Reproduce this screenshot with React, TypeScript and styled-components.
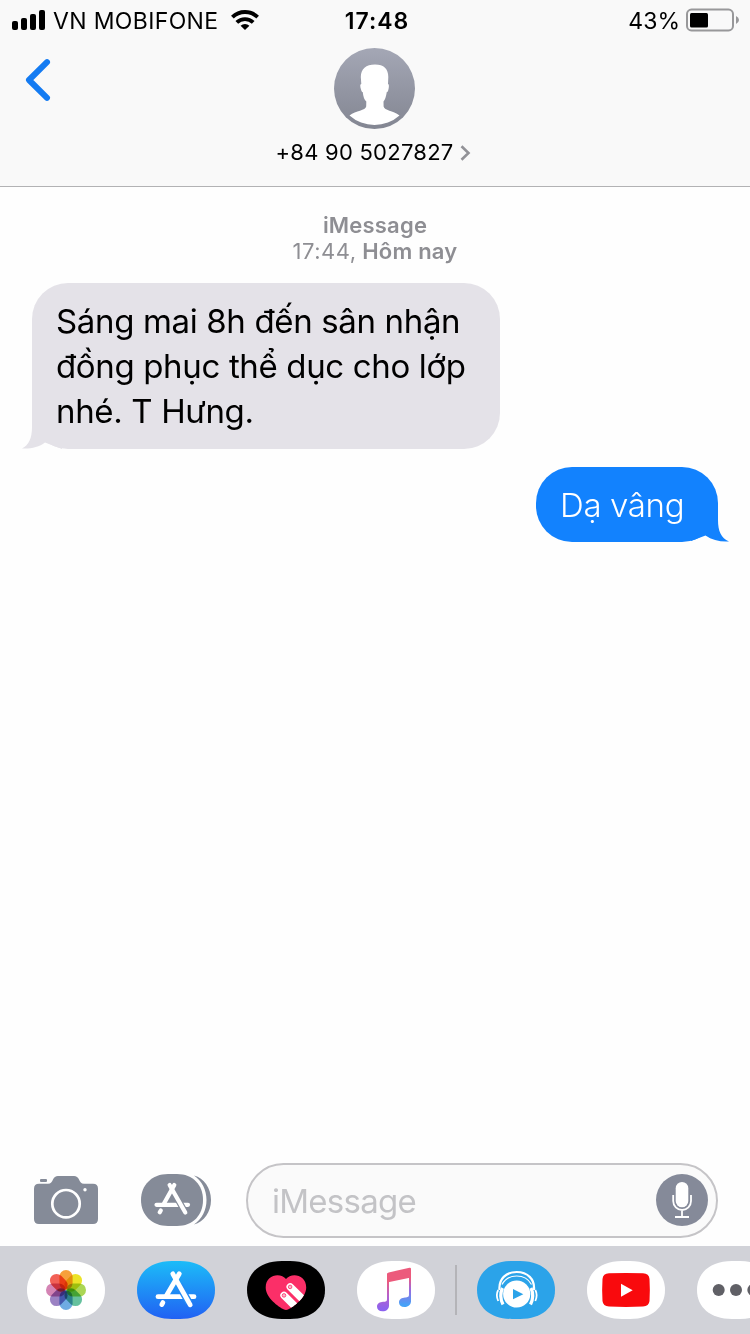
import React from "react";
import styled, { createGlobalStyle } from "styled-components";

const Global = createGlobalStyle`
  * { box-sizing: border-box; }
  body { margin: 0; background: #fff; overflow: hidden; }
`;

const Screen = styled.div`
  width: 750px;
  height: 1334px;
  display: flex;
  flex-direction: column;
  overflow: hidden;
  background: #fefefe;
  color: #000;
  font-family: Inter, "Liberation Sans", sans-serif;
  svg { display: block; flex: none; }
`;

const Header = styled.header`
  height: 187px;
  background: #f9f9f9;
  border-bottom: 1px solid #b2b2b4;
`;

const StatusBar = styled.div`
  height: 40px;
  display: grid;
  grid-template-columns: 1fr auto 1fr;
  padding: 0 11px 0 12px;
  line-height: 40px;
`;

const StatusGroup = styled.div<{ $end?: boolean }>`
  display: flex;
  align-items: center;
  justify-content: ${(p) => (p.$end ? "flex-end" : "flex-start")};
`;

const StatusText = styled.span<{ $spacing: number; $bold?: boolean }>`
  font-size: 23px;
  line-height: 42px;
  height: 40px;
  white-space: nowrap;
  font-weight: ${(p) => (p.$bold ? 600 : 400)};
  letter-spacing: ${(p) => p.$spacing}px;
`;

const Carrier = styled(StatusText)`
  width: 166px;
  margin: 0 12px 0 7px;
`;

const Clock = styled(StatusText)`
  padding-left: 3px;
`;

const Percent = styled(StatusText)`
  margin-right: 6px;
`;

const NavBar = styled.div`
  display: grid;
  grid-template-columns: 1fr auto 1fr;
  padding: 8px 26px 0 25px;
`;

const BackButton = styled.div`
  padding-top: 11px;
`;

const Contact = styled.div`
  display: flex;
  flex-direction: column;
  align-items: center;
`;

const PhoneRow = styled.div`
  display: flex;
  align-items: center;
  gap: 6px;
  margin: 8px 3px 0 0;
  font-size: 22px;
  line-height: 30px;
  letter-spacing: 0.25px;
  white-space: nowrap;
  svg { margin-top: 2px; }
`;

const Conversation = styled.main`
  flex: 1;
  display: flex;
  flex-direction: column;
  padding: 25px 32px 0;
`;

const Stamp = styled.div`
  text-align: center;
  color: #8e8e93;
  font-size: 22px;
  line-height: 26px;
  letter-spacing: 0.2px;
  font-weight: 600;
  span { font-weight: 400; letter-spacing: 0.5px; }
`;

const Bubble = styled.div<{ $mine?: boolean }>`
  position: relative;
  z-index: 0;
  align-self: ${(p) => (p.$mine ? "flex-end" : "flex-start")};
  width: ${(p) => (p.$mine ? 182 : 468)}px;
  margin-top: ${(p) => (p.$mine ? 18 : 19)}px;
  padding: ${(p) => (p.$mine ? "16px 24px 14px 24px" : "16px 24px 15px 24px")};
  border-radius: 36px;
  background: ${(p) => (p.$mine ? "#1282fe" : "#e4e2e8")};
  color: ${(p) => (p.$mine ? "#fff" : "#000")};
  font-size: 33px;
  line-height: 45px;
  letter-spacing: -0.35px;
  font-weight: ${(p) => (p.$mine ? 350 : 400)};
  white-space: nowrap;
`;

const Tail = styled.svg<{ $mine?: boolean }>`
  position: absolute;
  z-index: -1;
  bottom: 0;
  ${(p) => (p.$mine ? "right: -11px;" : "left: -10px;")}
`;

const Composer = styled.div`
  height: 83px;
  display: flex;
  align-items: center;
  padding: 0 32px 8px 34px;
`;

const CameraButton = styled.div`
  margin-top: -2px;
`;

const DrawerButton = styled.div`
  margin: -2px 35px 0 43px;
`;

const MicButton = styled.div`
  margin-top: -2px;
`;

const InputField = styled.div`
  flex: 1;
  height: 75px;
  display: flex;
  align-items: center;
  justify-content: space-between;
  padding: 0 8px 0 24px;
  border: 2px solid #c5c4c7;
  border-radius: 38px;
  background: #fafafa;
  color: #c3c3c6;
  font-size: 33px;
  letter-spacing: -0.75px;
`;

const AppStrip = styled.nav`
  height: 88px;
  display: flex;
  align-items: flex-start;
  padding: 15px 0 0 27px;
  gap: 32px;
  background: #d1d2d8;
`;

const Divider = styled.div`
  flex: none;
  width: 2px;
  height: 50px;
  margin: 4px -12px;
  background: #b4b4b8;
`;

const PILL =
  "M35 0H43C65 0 78 12 78 29S65 58 43 58H35C13 58 0 46 0 29S13 0 35 0Z";

const Pill = ({ fill, children }: { fill: string; children: React.ReactNode }) => (
  <svg width="78" height="58" viewBox="0 0 78 58">
    <path d={PILL} fill={fill} />
    {children}
  </svg>
);

const petals = [
  "#f79a2e", "#ebe21a", "#a6d44a", "#5cbd98",
  "#66a6e2", "#957abf", "#d27cb0", "#f2574c",
];

const Signal = () => (
  <svg width="34" height="20" viewBox="0 0 34 20">
    <rect x="0" y="11" width="6" height="9" rx="2" />
    <rect x="9" y="8" width="6" height="12" rx="2" />
    <rect x="18" y="4" width="6" height="16" rx="2" />
    <rect x="27" y="0" width="6" height="20" rx="2" />
  </svg>
);

const Wifi = () => (
  <svg width="28" height="20" viewBox="0 0 28 20">
    <g fill="none" stroke="#000" strokeWidth="3.9">
      <path d="M1.4 7.2A18 18 0 0 1 26.6 7.2" />
      <path d="M5.8 12.4A11.8 11.8 0 0 1 22.2 12.4" />
    </g>
    <path d="M9.6 15.8A6.3 6.3 0 0 1 18.4 15.8L14 20Z" />
  </svg>
);

const Battery = () => (
  <svg width="53" height="24" viewBox="0 0 53 24">
    <rect x="1" y="1.6" width="46" height="20.8" rx="4.5" fill="none" stroke="#98989a" strokeWidth="2" />
    <rect x="4" y="5" width="18" height="14.5" rx="1.5" />
    <path d="M50 8Q53 9.5 53 12T50 16Z" fill="#98989a" />
  </svg>
);

const Avatar = () => (
  <svg width="81" height="81" viewBox="0 0 81 81">
    <defs>
      <linearGradient id="avatar" x2="0" y2="1">
        <stop offset="0" stopColor="#a4a7b5" />
        <stop offset="1" stopColor="#838692" />
      </linearGradient>
    </defs>
    <circle cx="40.5" cy="40.5" r="40.5" fill="url(#avatar)" />
    <path
      fill="#fff"
      d="M41 16.5C50 16.5 54.3 21 54.3 29L54 36C55.3 36 55 39.5 54.3 42C53.8 44 53.2 44 52.8 44C52 49 51 51.5 49.5 53.5L49.6 58.5C50.3 62.5 59 62.5 65.5 67.5A37.5 37.5 0 0 1 15.500 67.5C22 62.5 31.5 62.5 32.2 58.5L32.3 53.5C30.3 51.5 29.3 49 28.7 44C28 44 27.6 43.5 27 41.5C26 38.5 26 36 27.3 36L26.8 29C26.8 21 32 16.5 41 16.5Z"
    />
  </svg>
);

const Camera = () => (
  <svg width="64" height="48" viewBox="0 0 64 48" fill="#858b98">
    <rect x="6" y="3" width="7" height="3" rx="1" />
    <path d="M5 7.7H14C17 7.7 17.8 6 19 3.5Q20.5 0 24 0H40Q43.5 0 45 3.5C46.2 6 47 7.7 50 7.7H59Q64 7.7 64 12.7V43Q64 48 59 48H5Q0 48 0 43V12.7Q0 7.7 5 7.7Z" />
    <circle cx="32" cy="27.7" r="13.7" fill="none" stroke="#fff" strokeWidth="2.7" />
    <circle cx="51" cy="13.7" r="1.7" fill="#fff" />
  </svg>
);

const Drawer = () => (
  <svg width="70" height="52" viewBox="0 0 70 52">
    <path d="M27 0H36C52 0 62 11 62 26S52 52 36 52H27C11 52 0 41 0 26S11 0 27 0Z" fill="#858b98" />
    <path d="M53 1.5C63 4 70 14 70 26S63 48 53 50.5C61 45 65.5 36 65.5 26S61 7 53 1.5Z" fill="#858b98" />
    <g stroke="#fff" strokeWidth="4.2" strokeLinecap="round">
      <path d="M15.5 30.8H47" />
      <path d="M33.3 11L23 29.5M19.8 36.5L18.7 38.3" />
      <path d="M28.6 11L44.3 38.5" stroke="#858b98" strokeWidth="6.5" strokeDasharray="0 12 18 20" strokeLinecap="butt" />
      <path d="M28.6 11L44.3 38.5" />
    </g>
  </svg>
);

const Mic = () => (
  <svg width="52" height="52" viewBox="0 0 52 52">
    <circle cx="26" cy="26" r="26" fill="#858a99" />
    <rect x="19.7" y="8" width="12.6" height="25.3" rx="6.3" fill="#fff" />
    <path d="M17.2 21V27A8.9 9 0 0 0 35 27V21M26 36V43M19 43H33" fill="none" stroke="#fff" strokeWidth="1.8" />
  </svg>
);

const Photos = () => (
  <Pill fill="#fff">
    {petals.map((c, i) => (
      <rect
        key={c}
        x="32.4"
        y="9"
        width="13.2"
        height="19.6"
        rx="6.6"
        fill={c}
        opacity="0.94"
        transform={`rotate(${i * 45} 39 29)`}
        style={{ mixBlendMode: "multiply" }}
      />
    ))}
  </Pill>
);

const AppStore = () => (
  <Pill fill="url(#store)">
    <defs>
      <linearGradient id="store" x2="0" y2="1">
        <stop offset="0" stopColor="#1cbcf8" />
        <stop offset="1" stopColor="#2161f3" />
      </linearGradient>
    </defs>
    <g stroke="#fff" strokeWidth="4.8" strokeLinecap="round">
      <path d="M21 35.7H57" />
      <path d="M42.3 12.8L29.5 34.5M25.9 41.6L24.8 43.6" />
      <path d="M35.8 12.8L53.2 43.8" stroke="#248af5" strokeWidth="7.5" strokeDasharray="0 13 20 30" strokeLinecap="butt" />
      <path d="M35.8 12.8L53.2 43.8" />
    </g>
  </Pill>
);

const HEART =
  "M39 18C34 11.5 18.7 13 18.7 26.5C18.7 37 32 46 36.5 48.3Q39 49.5 41.5 48.3C46 46 59.2 37 59.2 26.5C59.2 13 44 11.5 39 18Z";

const DigitalTouch = () => (
  <Pill fill="#000">
    <clipPath id="heart">
      <path d={HEART} />
    </clipPath>
    <path d={HEART} fill="#fb2f68" />
    <g clipPath="url(#heart)" stroke="#fff" strokeWidth="7.4" strokeLinecap="round">
      <path d="M43.2 25.8L60 42.6M37 34.3L54 51.3" />
    </g>
    <g fill="#fb2f68" fillOpacity="0.35" stroke="#fb2f68" strokeWidth="0.8">
      <circle cx="43.1" cy="25.9" r="1.8" />
      <circle cx="37" cy="34.4" r="1.8" />
    </g>
  </Pill>
);

const Music = () => (
  <Pill fill="#fff">
    <defs>
      <linearGradient id="noteL" gradientUnits="userSpaceOnUse" x1="0" y1="10" x2="0" y2="48">
        <stop offset="0.25" stopColor="#ee5b7e" />
        <stop offset="0.65" stopColor="#b560cc" />
        <stop offset="1" stopColor="#8c62ee" />
      </linearGradient>
      <linearGradient id="noteR" gradientUnits="userSpaceOnUse" x1="0" y1="10" x2="0" y2="44">
        <stop offset="0.2" stopColor="#ee5b7e" />
        <stop offset="0.55" stopColor="#9a6ae0" />
        <stop offset="1" stopColor="#45a2f8" />
      </linearGradient>
    </defs>
    <g fill="url(#noteL)">
      <path d="M30 12.5H32V45H30Z" />
      <path d="M32 40V44.5C32 48 29.5 50.3 25.5 50.3C22 50.3 20 48.5 20 45.8C20 42.5 23 41 26 40.8C29 40.6 30 40.5 30 38Z" />
    </g>
    <g fill="url(#noteR)">
      <path d="M52 8H54V41H52Z" />
      <path d="M54 35V40C54 43.5 51.5 46 47.5 46C44 46 42 44.2 42 41.5C42 38.2 45 36.7 48 36.5C51 36.3 52 36 52 33.5Z" />
    </g>
    <path d="M30 13.5Q30 11.8 31.7 11.4L52.5 6.8Q54 6.5 54 8V16.5L30 21.5Z" fill="#ec5a7c" />
  </Pill>
);

const Headphones = () => (
  <Pill fill="#2ba3e9">
    <g fill="none" stroke="#fff">
      <path d="M22.5 29C21.5 18 29 11 39.7 11S58 18 57 29" strokeWidth="2.2" />
      <path d="M25 23.5C28 18 33 15 39.7 15S51.5 18 54.5 23.5" strokeWidth="1.2" />
      <path d="M25.5 27Q21.8 35 26 43.5" strokeWidth="3.2" />
      <path d="M54 27Q57.7 35 53.5 43.5" strokeWidth="3.2" />
      <path d="M21.2 29Q18.5 34 21.2 40M58.3 29Q61 34 58.3 40" strokeWidth="1.8" />
    </g>
    <circle cx="39.7" cy="33" r="13.6" fill="#fff" />
    <path d="M36 28V38.3L46.3 33.2Z" fill="#2ba3e9" />
  </Pill>
);

const YouTube = () => (
  <Pill fill="#fff">
    <path d="M22 12.3Q39 11.5 56 12.3Q62 12.5 62.5 18Q63.2 29 62.5 40Q62 45.3 56 45.5Q39 46.3 22 45.5Q16 45.3 15.5 40Q14.8 29 15.5 18Q16 12.5 22 12.3Z" fill="#f90a0d" />
    <path d="M34 22.7V35.7L45.7 29.2Z" fill="#fff" />
  </Pill>
);

const More = () => (
  <Pill fill="#fff">
    <g fill="#606066">
      <circle cx="21.7" cy="29" r="6" />
      <circle cx="39" cy="29" r="6" />
      <circle cx="56.3" cy="29" r="6" />
    </g>
  </Pill>
);

export default function App() {
  return (
    <Screen>
      <Global />
      <Header>
        <StatusBar>
          <StatusGroup>
            <Signal />
            <Carrier $spacing={0.35}>VN MOBIFONE</Carrier>
            <Wifi />
          </StatusGroup>
          <Clock $bold $spacing={1}>17:48</Clock>
          <StatusGroup $end>
            <Percent $spacing={0}>43%</Percent>
            <Battery />
          </StatusGroup>
        </StatusBar>
        <NavBar>
          <BackButton>
            <svg width="26" height="42" viewBox="0 0 26 42" fill="none" stroke="#147bf2" strokeWidth="6" strokeLinecap="round" strokeLinejoin="round">
              <path d="M22 3.2L4 21L22 38.8" />
            </svg>
          </BackButton>
          <Contact>
            <Avatar />
            <PhoneRow>
              +84 90 5027827
              <svg width="11" height="16" viewBox="0 0 11 16" fill="none" stroke="#929297" strokeWidth="2.6">
                <path d="M1.5 1.2L8.5 8L1.5 14.8" />
              </svg>
            </PhoneRow>
          </Contact>
        </NavBar>
      </Header>
      <Conversation>
        <Stamp>iMessage</Stamp>
        <Stamp>
          <span>17:44,</span> Hôm nay
        </Stamp>
        <Bubble>
          Sáng mai 8h đến sân nhận
          <br />
          đồng phục thể dục cho lớp
          <br />
          nhé. T Hưng.
          <Tail width="40" height="36" viewBox="0 0 40 36">
            <path d="M10 0V14C10 25 7 32 0 35.5C9 36 17 34 23 29.5L40 36V0Z" fill="#e4e2e8" />
          </Tail>
        </Bubble>
        <Bubble $mine>
          Dạ vâng
          <Tail $mine width="40" height="36" viewBox="0 0 40 36">
            <path d="M29 0V14C29 25 32 32 40 35.5C31 36 23 34 16.5 29.5L2 35V0Z" fill="#1282fe" />
          </Tail>
        </Bubble>
      </Conversation>
      <Composer>
        <CameraButton>
          <Camera />
        </CameraButton>
        <DrawerButton>
          <Drawer />
        </DrawerButton>
        <InputField>
          iMessage
          <MicButton>
            <Mic />
          </MicButton>
        </InputField>
      </Composer>
      <AppStrip>
        <Photos />
        <AppStore />
        <DigitalTouch />
        <Music />
        <Divider />
        <Headphones />
        <YouTube />
        <More />
      </AppStrip>
    </Screen>
  );
}
